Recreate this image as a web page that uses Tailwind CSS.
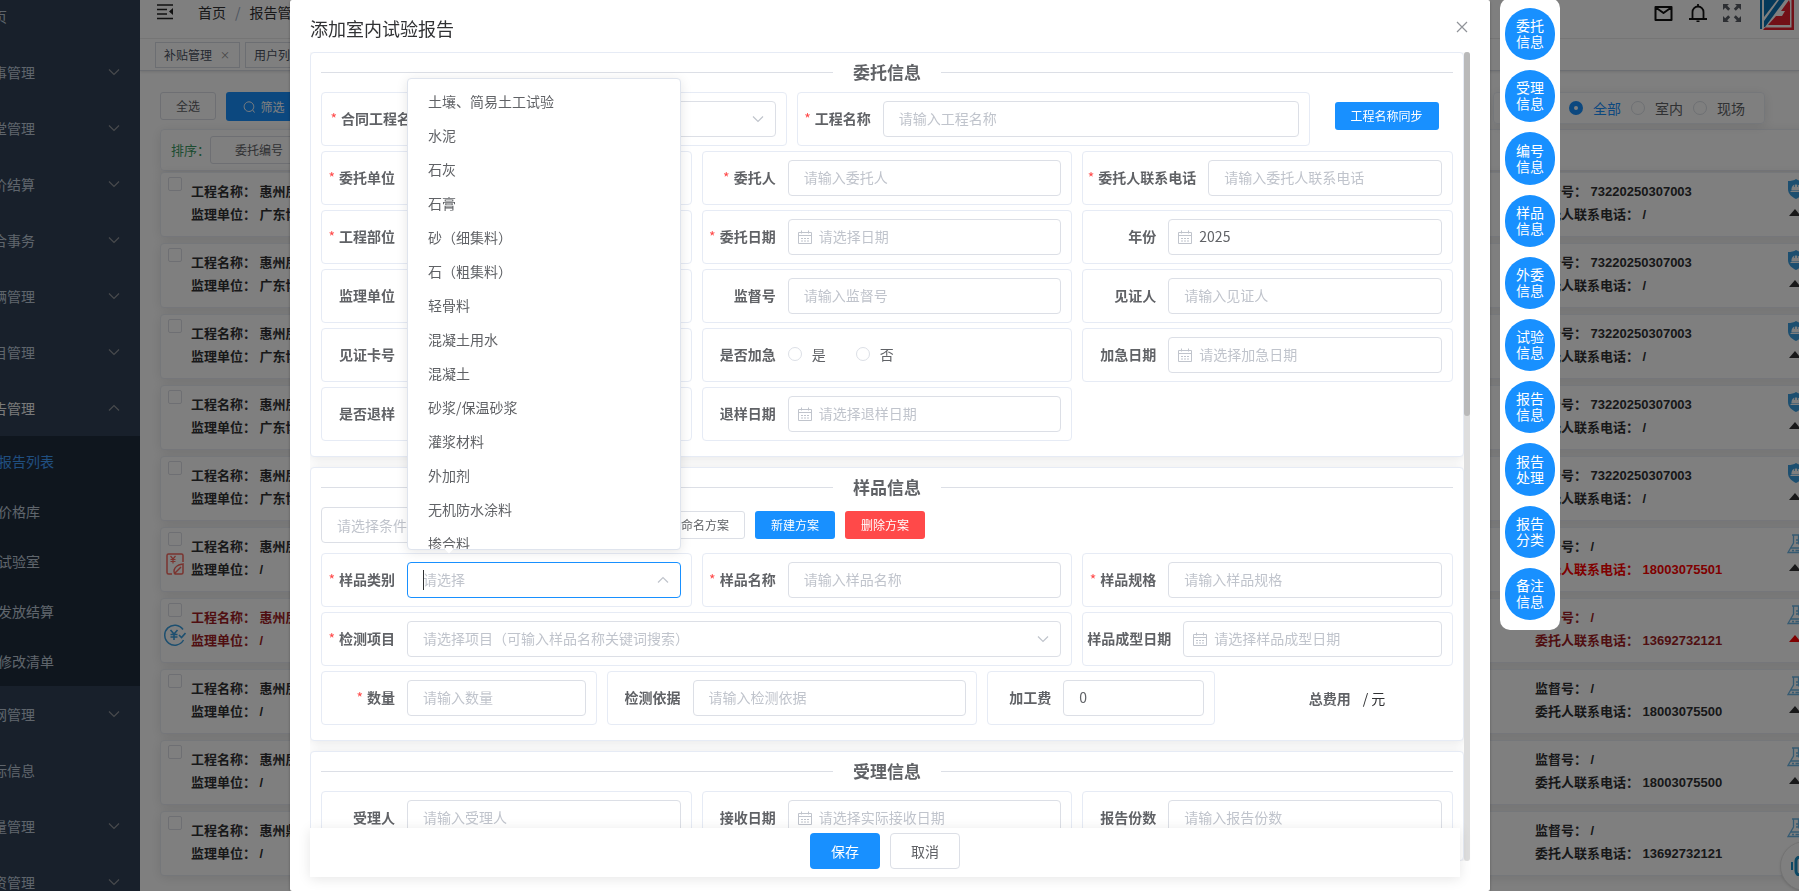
<!DOCTYPE html>
<html lang="zh-CN">
<head>
  <meta charset="UTF-8" />
  <meta name="viewport" content="width=device-width, initial-scale=1" />
  <title>添加室内试验报告</title>
  <script src="https://cdn.jsdelivr.net/npm/@tailwindcss/browser@4"></script>
</head>
<body class="h-screen overflow-hidden bg-white font-['Noto_Sans_CJK_SC',sans-serif] text-sm text-[#606266]">

  <!-- 图标 -->
  <svg class="hidden">
    <symbol id="down" viewBox="0 0 12 12"><path d="M1 3.5l5 5 5-5" fill="none" stroke="currentColor" stroke-width="1.200" /></symbol>
    <symbol id="up" viewBox="0 0 12 12"><path d="M1 8.5l5-5 5 5" fill="none" stroke="currentColor" stroke-width="1.200" /></symbol>
    <symbol id="calendar" viewBox="0 0 14 14"><path d="M.5 2.500h13v11H.5zM.5 5.500h13M3.500 .5v3M10.500 .5v3M3 8.500h2M6 8.500h2M9 8.500h2M3 11h2M6 11h2M9 11h2" fill="none" stroke="currentColor" /></symbol>
    <symbol id="shield" viewBox="0 0 16 20"><path d="M8 0c2 1.500 5 2 8 2v8c0 5-4 8-8 10-4-2-8-5-8-10V2c3 0 6-.5 8-2z" fill="#3b9fe0" /><path d="M2.500 12.500h11M4 11c0-3 1.500-5 4-5s4 2 4 5z" fill="#fff" stroke="#fff" stroke-width="1.200" /><path d="M6.500 5v3M9.500 5v3" stroke="#3b9fe0" stroke-width=".7" /></symbol>
    <symbol id="flask" viewBox="0 0 18 20"><path d="M5 1h8M6.500 1v8L1 18.500h16L11.500 9V1M4 14h10M5 16.500h2M8.500 16.500h4M9 6h2.500M9 9h2.500" fill="none" stroke="#6db6e4" stroke-width="1.300" /></symbol>
    <symbol id="bill" viewBox="0 0 18 22"><path d="M17 9V2.500C17 1.500 16.500 1 15.500 1h-13C1.500 1 1 1.500 1 2.500v17c0 1 .5 1.500 1.500 1.500H6" fill="none" stroke="#f5685f" stroke-width="1.500" /><path d="M4.500 3l2.500 3 2.500-3M7 6v4.500M4.500 6.500h5M4.500 8.500h5" fill="none" stroke="#f5685f" stroke-width="1.200" /><path d="M9 21c-2-2-1-6 2-8 2-1.500 4-1.500 6-2v8.500c0 1-.5 1.500-1.500 1.500zM8 21l7-7" fill="none" stroke="#f5685f" stroke-width="1.500" /></symbol>
    <symbol id="paid" viewBox="0 0 22 22"><path d="M19 5.500A10 10 0 1 0 19.500 16" fill="none" stroke="#3b9fe0" stroke-width="1.500" /><path d="M6.500 6l3.500 4 3.500-4M10 10v6M6.500 10.500h7M6.500 13h7M15 11l2.500 2.500L21.500 9" fill="none" stroke="#3b9fe0" stroke-width="1.600" /></symbol>
  </svg>

  <div class="flex h-full">
    <!-- 侧边栏 -->
    <aside class="flex w-[140px] shrink-0 justify-end overflow-hidden bg-[#304156]">
      <nav id="menu" class="-mt-3 w-[210px] shrink-0 text-[#bfcbd9]"></nav>
    </aside>

    <!-- 列表页 -->
    <div class="min-w-0 flex-1 overflow-hidden">
      <header class="flex h-[39px] items-start border-b border-[#f0f0f0] pl-[17px] pr-[5px]">
        <svg class="mt-1 size-4" viewBox="0 0 16 16"><path d="M0 1h16M0 5.500h10M0 10h10M0 14.500h16" stroke="#222" stroke-width="1.500" /><path d="M16 4v7l-4-3.500z" fill="#222" /></svg>
        <p class="ml-[25px] flex gap-[9px] leading-6 text-[#303133]"><a href="#">首页</a><span class="text-[#97a8be]">/</span><a href="#">报告管理</a></p>
        <div class="ml-auto flex items-start gap-4">
          <svg class="mt-1 h-[18px] w-[19px]" viewBox="0 0 19 18"><path d="M1.500 3h16v13h-16zM2.500 4l7 5 7-5" fill="none" stroke="#111" stroke-width="2" stroke-linejoin="round" /></svg>
          <svg class="mt-1 size-[18px]" viewBox="0 0 18 18"><path d="M0 15h18M3.500 15V8a5.500 5.500 0 0 1 11 0v7M9 0v2.500M7.500 17.500h3" fill="none" stroke="#111" stroke-width="1.800" /></svg>
          <svg class="mt-1 size-[18px]" viewBox="0 0 18 18"><path d="M0 0h6L4.200 1.800l3 3-2 2-3-3L0 6zM18 0v6l-2.200-2.200-3 3-2-2 3-3L12 0zM0 18v-6l2.200 2.200 3-3 2 2-3 3L6 18zM18 18h-6l1.800-1.800-3-3 2-2 3 3L18 12z" fill="#5a5e66" /></svg>
          <svg class="ml-[3px] h-[30px] w-[34px]" viewBox="0 0 34 30"><path d="M0 0h34v30H0z" fill="#fff" /><path d="M0 0h2v29H0zM4 0h13L4 17zM19 0h6L5 27H4v-6z" fill="#0b72b5" /><path d="M31.500 0H34v30H3l2-2.500h26.500zM30 3v22H8l8-9h6L25 11h-4L29 0z" fill="#e5202f" /></svg>
        </div>
      </header>

      <div class="flex h-8 items-center gap-[5px] border-b border-[#d8dce5] pl-[15px] text-xs shadow-[0_1px_3px_rgba(0,0,0,0.12)]">
        <a href="#" class="flex h-[26px] w-[85px] items-center gap-2 border border-[#d8dce5] px-2 text-[#495060]">补贴管理<span class="text-[10px] text-[#888]">×</span></a>
        <a href="#" class="flex h-[26px] w-[85px] items-center gap-2 border border-[#d8dce5] px-2 text-[#495060]">用户列表<span class="text-[10px] text-[#888]">×</span></a>
      </div>

      <main class="w-[calc(100%+20px)] pl-[20px] pt-[21px]">
        <div class="flex h-9 items-start pr-[54px]">
          <button class="h-7 w-14 rounded-[3px] border border-[#dcdfe6] bg-white text-xs">全选</button>
          <button class="ml-[10px] flex h-[29px] w-[80px] items-center justify-center gap-[5px] rounded-[3px] bg-[#1890ff] pr-1 text-xs text-white">
            <svg class="size-3" viewBox="0 0 12 12"><path d="M9.200 9.200a4.800 4.800 0 1 1 .3-.3L11.500 11.500" fill="none" stroke="#fff" /></svg>筛选
          </button>
          <div class="ml-auto flex h-8 w-[272px] items-center justify-end rounded border border-[#ebeef5] pr-[19px] shadow-[0_2px_12px_rgba(0,0,0,0.1)]">
            <label class="flex items-center gap-[10px] pr-[10px] text-[#1890ff]"><input type="radio" name="kind" checked class="size-[14px] appearance-none rounded-full border-[5px] border-[#1890ff]" />全部</label>
            <label class="flex items-center gap-[10px] pr-[10px]"><input type="radio" name="kind" class="size-[14px] appearance-none rounded-full border border-[#dcdfe6]" />室内</label>
            <label class="flex items-center gap-[10px]"><input type="radio" name="kind" class="size-[14px] appearance-none rounded-full border border-[#dcdfe6]" />现场</label>
          </div>
        </div>
        <div class="mt-px flex h-[42px] items-center rounded border border-[#ebeef5] pl-[10px] shadow-[0_2px_12px_rgba(0,0,0,0.1)]">
          <span class="w-[39px] text-[13px] text-[#3a9a62]">排序：</span>
          <button class="h-7 w-[98px] rounded-[3px] border border-[#dcdfe6] bg-white text-xs">委托编号</button>
        </div>
        <div id="cards" class="mt-px flex flex-col gap-[6px]"></div>
      </main>
    </div>
  </div>

  <!-- 客服 -->
  <button aria-label="客服" class="fixed -right-[31px] bottom-0 size-[50px] rounded-full border border-[#e4e4e4] bg-white shadow">
    <svg class="ml-[10px] h-5 w-7" viewBox="0 0 28 20"><path d="M1 6v8" stroke="#1890c8" stroke-width="2" /><rect x="5" y="1" width="18" height="18" rx="4" fill="none" stroke="#1890c8" stroke-width="3" /></svg>
  </button>

  <!-- 弹窗 -->
  <div class="fixed inset-0 flex justify-center bg-black/50 pr-[19px]">
    <div role="dialog" aria-labelledby="dialogTitle" class="relative h-full w-[1200px] rounded-[2px] bg-white px-[20px] shadow-[0_1px_3px_rgba(0,0,0,0.3)]">
      <div class="flex h-[52px] items-center justify-between pt-1">
        <h1 id="dialogTitle" class="text-lg leading-6 text-[#303133]">添加室内试验报告</h1>
        <button aria-label="关闭" class="mb-[2px] mr-[2px] text-[#909399]"><svg class="size-3" viewBox="0 0 12 12"><path d="M1 1l10 10M11 1L1 11" stroke="currentColor" stroke-width="1.200" /></svg></button>
      </div>
      <form id="form" class="relative flex h-[calc(100%-82px)] flex-col gap-[10px] overflow-hidden pr-[6px]"></form>
      <div class="absolute inset-x-[20px] bottom-[14px] mr-[10px] flex h-[49px] justify-center gap-[10px] bg-white pt-[5px] shadow-[0_2px_12px_rgba(0,0,0,0.1)]">
        <button class="h-9 w-[70px] rounded bg-[#1890ff] text-white">保存</button>
        <button class="h-9 w-[70px] rounded border border-[#dcdfe6] bg-white">取消</button>
      </div>
      <nav id="anchors" class="absolute -top-[2px] left-full ml-[10px] flex h-[632px] w-[60px] flex-col gap-[10px] rounded-[10px] bg-white px-[5px] py-[10px]"></nav>
    </div>
  </div>

  <script>
    // 侧边菜单
    const menus = ['首页', '人事管理', '食堂管理', '报价结算', '综合事务', '车辆管理', '项目管理', '报告管理', '官网管理', '招标信息', '质量管理', '物资管理'];
    const noArrow = ['首页', '招标信息'];
    const subMenus = ['报告列表', '价格库', '试验室', '发放结算', '修改清单'];

    document.getElementById('menu').innerHTML = menus.map(m => {
      const open = m === '报告管理';
      const arrow = noArrow.includes(m) ? '' : `<svg class="size-3 text-[#909399]"><use href="${open ? '#up' : '#down'}" /></svg>`;
      const sub = !open ? '' : `<div class="bg-[#1f2d3d]">${subMenus.map((s, i) => `
        <a href="#" class="flex h-[50px] items-center pl-[68px] ${i === 0 ? 'text-[#409eff]' : ''}">${s}</a>`).join('')}</div>`;
      return `<a href="#" class="flex h-14 items-center justify-between pl-[49px] pr-[20px] ${open ? 'text-[#f4f4f5]' : ''}">${m}${arrow}</a>${sub}`;
    }).join('');

    // 报告列表
    const reports = [
      ['惠州房地产项目', '广东博建监理', '73220250307003', '/'],
      ['惠州房地产项目', '广东博建监理', '73220250307003', '/'],
      ['惠州房地产项目', '广东博建监理', '73220250307003', '/'],
      ['惠州房地产项目', '广东博建监理', '73220250307003', '/'],
      ['惠州房地产项目', '广东博建监理', '73220250307003', '/'],
      ['惠州房地产项目', '/', '/', '18003075501'],
      ['惠州房地产项目', '/', '/', '13692732121'],
      ['惠州房地产项目', '/', '/', '18003075500'],
      ['惠州房地产项目', '/', '/', '18003075500'],
      ['惠州鼎业项目', '/', '/', '13692732121'],
    ];

    document.getElementById('cards').innerHTML = reports.map(([name, unit, no, tel], i) => `
      <article class="flex h-[65px] items-start rounded border border-[#ebeef5] bg-white pt-1 font-['Liberation_Sans','Noto_Sans_CJK_SC',sans-serif] text-[13px] leading-[23px] font-bold shadow-[0_2px_12px_rgba(0,0,0,0.1)] ${i === 6 ? 'text-[#a01c24]' : 'text-[#303133]'}">
        <div class="flex w-[30px] shrink-0 flex-col items-center pr-[3px]">
          <input type="checkbox" aria-label="选择" class="size-[14px] shrink-0 appearance-none rounded-[2px] border border-[#dcdfe6]" />
          ${i === 5 ? '<svg class="mt-[7px] h-[22px] w-[18px]"><use href="#bill" /></svg>' : ''}
          ${i === 6 ? '<svg class="mt-[7px] size-[22px]"><use href="#paid" /></svg>' : ''}
        </div>
        <div class="flex-1 pt-[3px]">
          <p>工程名称：&nbsp;${name}</p>
          <p>监理单位：&nbsp;${unit}</p>
        </div>
        <div class="w-[252px] pt-[3px]">
          <p>监督号：&nbsp;${no}</p>
          <p class="${i === 5 ? 'text-[#ff0000]' : ''}">委托人联系电话：&nbsp;${tel}</p>
        </div>
        <div class="flex w-[31px] flex-col">
          <svg class="mt-[2px] h-5 w-[18px]"><use href="${i < 5 ? '#shield' : '#flask'}" /></svg>
          <svg class="mt-[10px] ml-[2px] h-[7px] w-3 ${i === 6 ? 'text-[#ff0000]' : 'text-[#303133]'}" viewBox="0 0 12 7"><path d="M6 0l6 7H0z" fill="currentColor" /></svg>
        </div>
      </article>`).join('');

    // 右侧锚点
    const anchors = ['委托信息', '受理信息', '编号信息', '样品信息', '外委信息', '试验信息', '报告信息', '报告处理', '报告分类', '备注信息'];
    document.getElementById('anchors').innerHTML = anchors.map(a => `
      <a href="#" class="flex flex-1 items-center justify-center rounded-full bg-[#1890ff] px-[11px] pb-[2px] leading-4 text-white">${a}</a>`).join('');

    // 表单控件
    let uid = 0;
    const inputCls = 'h-9 w-full min-w-0 rounded border border-[#dcdfe6] bg-white pb-[2px] placeholder:text-[#c0c4cc] focus:outline-none';
    const categories = ['土壤、简易土工试验', '水泥', '石灰', '石膏', '砂（细集料）', '石（粗集料）', '轻骨料', '混凝土用水', '混凝土', '砂浆/保温砂浆', '灌浆材料', '外加剂', '无机防水涂料', '掺合料'];

    const controls = {
      text: (id, ph, val) => `<input id="${id}" type="text" placeholder="${ph}" value="${val}" class="${inputCls} px-[15px]" />`,
      date: (id, ph, val) => `
        <input id="${id}" type="text" placeholder="${ph}" value="${val}" class="${inputCls} pl-[30px] pr-[15px]" />
        <svg class="absolute left-[10px] top-[11px] size-[14px] text-[#c0c4cc]"><use href="#calendar" /></svg>`,
      select: (id, ph) => `
        <select id="${id}" class="${inputCls} appearance-none px-[15px] text-[#c0c4cc]"><option>${ph}</option></select>
        <svg class="pointer-events-none absolute right-3 top-3 size-3 text-[#c0c4cc]"><use href="#down" /></svg>`,
      radio: id => `
        <div id="${id}" class="flex h-[34px] items-center gap-[30px]">
          <label class="flex items-center gap-[10px]"><input type="radio" name="${id}" class="size-[14px] appearance-none rounded-full border border-[#dcdfe6]" />是</label>
          <label class="flex items-center gap-[10px]"><input type="radio" name="${id}" class="size-[14px] appearance-none rounded-full border border-[#dcdfe6]" />否</label>
        </div>`,
      combo: (id, ph) => `
        <input id="${id}" type="text" role="combobox" aria-expanded="true" aria-controls="categoryList" placeholder="${ph}" class="h-9 w-full min-w-0 rounded border border-[#1890ff] bg-white px-[15px] pb-[2px] placeholder:text-[#c0c4cc] focus:outline-none" />
        <span class="absolute left-4 top-2 h-5 w-px bg-[#303133]"></span>
        <svg class="absolute right-3 top-3 size-3 text-[#c0c4cc]"><use href="#up" /></svg>
        <div class="absolute inset-x-0 bottom-full z-10 mb-3 rounded border border-[#dfe4ed] bg-white shadow-[0_2px_12px_rgba(0,0,0,0.1)]">
          <ul id="categoryList" role="listbox" class="h-[470px] overflow-hidden rounded pt-[5px]">
            ${categories.map(c => `<li role="option" class="h-[34px] px-[20px] leading-[34px]">${c}</li>`).join('')}
          </ul>
          <svg class="absolute left-[35px] top-full -mt-[6px] h-[11px] w-3" viewBox="0 0 12 11"><path d="M1 5.500l5-2.500 5 2.500-5 5z" fill="#fff" /></svg>
        </div>`,
    };

    function field(label, type, ph = '', opt = {}) {
      const id = 'f' + (++uid);
      const star = opt.req ? '<span class="mr-1 font-normal text-[#ff4949]">*</span>' : '';
      return `
        <div class="${opt.span || 'col-span-8'} flex h-[54px] rounded border border-[#e6ebf5] py-2 pr-[10px]">
          <label for="${id}" class="${opt.lw || 'w-[85px]'} h-9 shrink-0 whitespace-nowrap pr-3 text-right leading-[34px] font-bold">${star}${label}</label>
          <div class="relative min-w-0 flex-1">${controls[type](id, ph, opt.val || '')}</div>
        </div>`;
    }

    function section(title, extra, fields) {
      return `
        <section class="shrink-0 rounded border border-[#e6ebf5] bg-white px-[10px] pb-[15px] shadow-[0_2px_12px_rgba(0,0,0,0.1)]">
          <h2 class="flex h-[39px] items-center gap-[20px] text-[17px] leading-6 font-bold before:h-px before:flex-1 before:bg-[#dcdfe6] after:h-px after:flex-1 after:bg-[#dcdfe6]"><span class="pb-[2px]">${title}</span></h2>
          ${extra}
          <div class="grid grid-cols-24 gap-x-[10px] gap-y-[5px]">${fields.join('')}</div>
        </section>`;
    }

    const req = true;
    document.getElementById('form').innerHTML =
      section('委托信息', '', [
        field('合同工程名称', 'select', '请选择', { req, span: 'col-span-10', lw: 'w-[115px]' }),
        field('工程名称', 'text', '请输入工程名称', { req, span: 'col-span-11' }),
        `<div class="col-span-3 flex justify-center pt-[10px]"><button type="button" class="h-7 w-[104px] rounded-[3px] bg-[#1890ff] text-xs text-white">工程名称同步</button></div>`,
        field('委托单位', 'text', '请输入委托单位', { req }),
        field('委托人', 'text', '请输入委托人', { req }),
        field('委托人联系电话', 'text', '请输入委托人联系电话', { req, lw: 'w-[125px]' }),
        field('工程部位', 'text', '请输入工程部位', { req }),
        field('委托日期', 'date', '请选择日期', { req }),
        field('年份', 'date', '', { val: '2025' }),
        field('监理单位', 'text', '请输入监理单位'),
        field('监督号', 'text', '请输入监督号'),
        field('见证人', 'text', '请输入见证人'),
        field('见证卡号', 'text', '请输入见证卡号'),
        field('是否加急', 'radio'),
        field('加急日期', 'date', '请选择加急日期'),
        field('是否退样', 'text'),
        field('退样日期', 'date', '请选择退样日期'),
      ]) +
      section('样品信息', `
        <div class="mb-[10px] flex items-center gap-[10px] text-xs">
          <select aria-label="条件方案" class="h-9 w-[322px] appearance-none rounded border border-[#dcdfe6] bg-white px-[15px] text-sm text-[#c0c4cc]"><option>请选择条件方案</option></select>
          <button type="button" class="h-7 rounded-[3px] border border-[#dcdfe6] px-[15px]">重命名方案</button>
          <button type="button" class="h-7 w-20 rounded-[3px] bg-[#1890ff] text-white">新建方案</button>
          <button type="button" class="h-7 w-20 rounded-[3px] bg-[#ff4949] text-white">删除方案</button>
        </div>`, [
        field('样品类别', 'combo', '请选择', { req }),
        field('样品名称', 'text', '请输入样品名称', { req }),
        field('样品规格', 'text', '请输入样品规格', { req }),
        field('检测项目', 'select', '请选择项目（可输入样品名称关键词搜索）', { req, span: 'col-span-16' }),
        field('样品成型日期', 'date', '请选择样品成型日期', { lw: 'w-[100px]' }),
        field('数量', 'text', '请输入数量', { req, span: 'col-span-6' }),
        field('检测依据', 'text', '请输入检测依据'),
        field('加工费', 'text', '', { span: 'col-span-5', lw: 'w-[75px]', val: '0' }),
        `<p class="col-span-5 flex items-center justify-center gap-3 pl-4"><b>总费用</b><span class="text-[#303133]">/ 元</span></p>`,
      ]) +
      section('受理信息', '', [
        field('受理人', 'text', '请输入受理人'),
        field('接收日期', 'date', '请选择实际接收日期'),
        field('报告份数', 'text', '请输入报告份数'),
      ]) +
      `<div class="absolute inset-y-0 right-0 w-[6px] rounded-[3px] bg-[#dedede]"><div class="h-[45%] rounded-[3px] bg-[#b9b9b9]"></div></div>`;
  </script>
</body>
</html>
